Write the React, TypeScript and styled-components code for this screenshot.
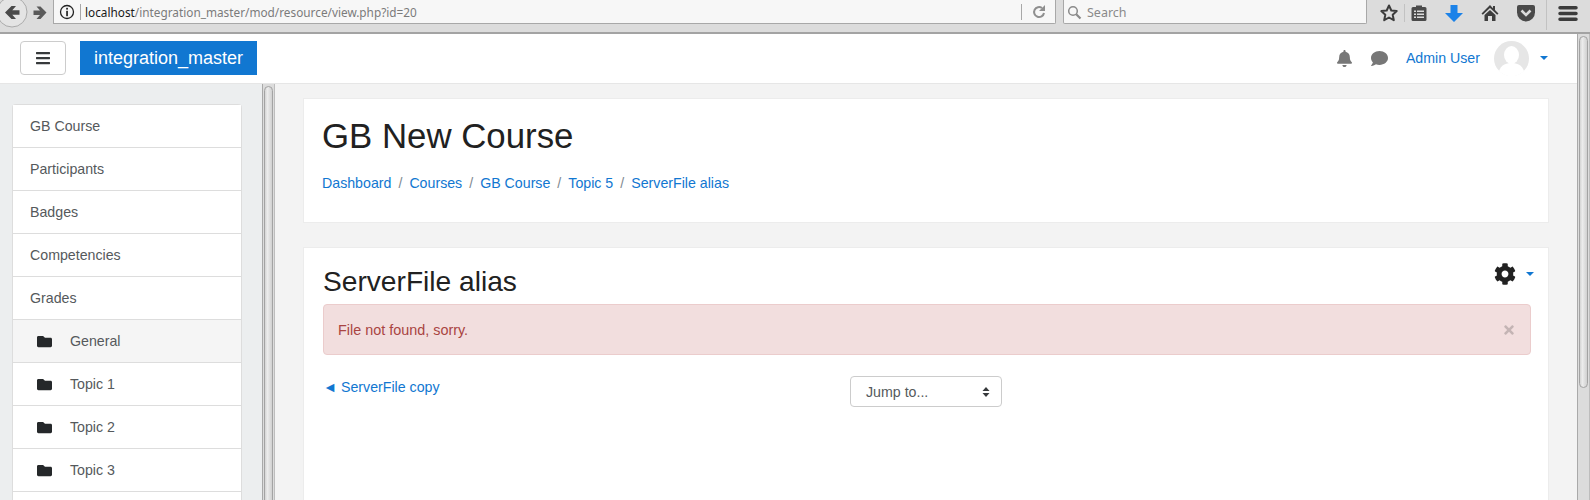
import styled, { createGlobalStyle } from 'styled-components'
import { FaBars, FaBell, FaCog, FaComment, FaFolder, FaTimes } from 'react-icons/fa'

const GlobalStyle = createGlobalStyle`
  html, body {
    margin: 0;
    padding: 0;
    background: #fff;
  }

  * {
    box-sizing: border-box;
  }
`

const Window = styled.div`
  width: 1590px;
  height: 500px;
  overflow: hidden;
  display: flex;
  flex-direction: column;
  font-family: "Liberation Sans", Arial, sans-serif;
  font-size: 14.2px;
  color: #373a3c;
`

/* browser chrome */
const Toolbar = styled.div`
  flex: none;
  height: 34px;
  display: flex;
  background: #dcdcdc;
  border-bottom: 2px solid #a3a3a3;
  overflow: hidden;
`

const NavButtons = styled.svg`
  flex: none;
  width: 53px;
  height: 32px;
`

const UrlBar = styled.div`
  flex: none;
  width: 1003px;
  height: 24px;
  display: flex;
  align-items: center;
  background: #f7f7f7;
  border: 1px solid #a8a8a8;
  border-top: 0;
  border-radius: 0 0 2px 0;
  font-family: "Noto Sans", sans-serif;
  font-size: 11.8px;
`

const InfoIcon = styled.svg`
  flex: none;
  width: 16px;
  height: 16px;
  margin: 0 5px 0 5px;
`

const UrlDivider = styled.div`
  flex: none;
  width: 1px;
  height: 16px;
  background: #a8a8a8;
  margin-right: ${props => props.$gap || 4}px;
`

const UrlText = styled.div`
  flex: 1;
  padding-top: 1px;
  color: #7b7b7b;
  white-space: nowrap;

  b {
    font-weight: 400;
    color: #1a1a1a;
  }
`

const ReloadIcon = styled.svg`
  flex: none;
  width: 16px;
  height: 16px;
  margin-right: 8px;
`

const SearchBar = styled.div`
  flex: none;
  width: 304px;
  height: 24px;
  margin-left: 7px;
  display: flex;
  align-items: center;
  gap: 5px;
  padding: 1px 0 0 3px;
  background: #f7f7f7;
  border: 1px solid #a8a8a8;
  border-top: 0;
  border-radius: 0 0 2px 2px;
  font-family: "Noto Sans", sans-serif;
  font-size: 12.5px;
  color: #8a8a8a;
`

const ToolIcons = styled.div`
  flex: 1;
  display: flex;
  align-items: flex-start;
  padding-top: 3px;
`

const ToolIcon = styled.svg`
  flex: none;
  width: 20px;
  height: 20px;
  margin-left: ${props => props.$left}px;
`

const ToolDivider = styled.div`
  flex: none;
  width: 1px;
  height: ${props => props.$tall ? 30 : 18}px;
  margin-top: ${props => props.$tall ? -3 : 1}px;
  margin-left: ${props => props.$left}px;
  background: #c2c2c2;
`

/* page */
const Viewport = styled.div`
  flex: 1;
  min-height: 0;
  display: flex;
`

const PageColumn = styled.div`
  flex: 1;
  min-width: 0;
  display: flex;
  flex-direction: column;
`

const TopNav = styled.div`
  flex: none;
  height: 50px;
  display: flex;
  align-items: flex-start;
  padding: 7px 0 0 20px;
  background: #fff;
  border-bottom: 1px solid #e6e6e6;
`

const MenuButton = styled.button`
  width: 46px;
  height: 34px;
  padding: 0;
  display: flex;
  align-items: center;
  justify-content: center;
  background: #fff;
  border: 1px solid #ccc;
  border-radius: 4px;
  color: #373a3c;
  font-size: 16px;
`

const Brand = styled.div`
  width: 177px;
  height: 34px;
  margin-left: 14px;
  display: flex;
  align-items: center;
  justify-content: center;
  background: #1177d1;
  color: #fff;
  font-size: 18px;
`

const UserMenu = styled.div`
  margin-left: auto;
  height: 34px;
  display: flex;
  align-items: center;
  color: #777;
`

const ChatIcon = styled(FaComment)`
  margin-left: 18px;
`

const UserName = styled.a`
  margin-left: 18px;
  color: #1177d1;
`

const Avatar = styled.svg`
  width: 35px;
  height: 35px;
  margin-left: 14px;
`

const Caret = styled.span`
  width: 0;
  height: 0;
  margin-left: ${props => props.$left}px;
  margin-right: ${props => props.$right || 0}px;
  border-left: 4px solid transparent;
  border-right: 4px solid transparent;
  border-top: 4px solid #1177d1;
`

const Columns = styled.div`
  flex: 1;
  min-height: 0;
  display: flex;
`

const Sidebar = styled.div`
  flex: none;
  width: 262px;
  padding: 20px 20px 0 12px;
  background: #eceeef;
  overflow: hidden;
`

const NavList = styled.div`
  background: #fff;
  border: 1px solid #ddd;
  border-bottom: 0;
  border-radius: 4px 4px 0 0;
`

const NavRow = styled.div`
  height: 43px;
  display: flex;
  align-items: center;
  padding-left: ${props => props.$nested ? 24 : 17}px;
  gap: 18px;
  background: ${props => props.$active ? '#f5f5f5' : '#fff'};
  border-bottom: 1px solid #ddd;
  color: #55595c;

  svg {
    color: #25282a;
    font-size: 15px;
  }
`

const ScrollTrack = styled.div`
  flex: none;
  width: 13px;
  padding: ${props => props.$top}px 1px 0;
  background: #dcdcdc;
  border-left: 1px solid #a9a9a9;
  border-right: 1px solid #bdbdbd;
  overflow: hidden;
`

const ScrollThumb = styled.div`
  height: ${props => props.$height}px;
  background: linear-gradient(to right, #d4d4d4, #ececec 35%, #d0d0d0);
  border: 1px solid #a3a3a3;
  border-radius: 6px;
`

const Main = styled.div`
  flex: 1;
  min-width: 0;
  padding: 14px 28px 0 28px;
  background: #f3f3f3;
  overflow: hidden;
`

const Card = styled.div`
  background: #fff;
  border: 1px solid #ececec;
`

const HeaderCard = styled(Card)`
  height: 125px;
  padding: 18px 18px 0;
  margin-bottom: 24px;
`

const CourseTitle = styled.h1`
  margin: 0;
  font-size: 34.8px;
  font-weight: 400;
  line-height: 38px;
  color: #212121;
`

const Breadcrumb = styled.div`
  margin-top: 18px;
  display: flex;
  gap: 7px;
  line-height: 20px;
  color: #818a91;

  a {
    color: #1177d1;
  }
`

const Crumb = styled.span`
  display: contents;
`

const ContentCard = styled(Card)`
  height: 300px;
  padding: 17px 17px 0 19px;
  position: relative;
`

const PageTitle = styled.h2`
  margin: 0 0 6px;
  font-size: 28.15px;
  font-weight: 400;
  line-height: 33px;
  color: #212121;
`

const ActionMenu = styled.div`
  position: absolute;
  top: 15px;
  right: 14px;
  display: flex;
  align-items: center;
  color: #212121;
  font-size: 22px;
`

const Alert = styled.div`
  height: 51px;
  padding: 0 14px;
  display: flex;
  align-items: center;
  justify-content: space-between;
  background: #f2dede;
  border: 1px solid #ebcccc;
  border-radius: 4px;
  color: #a94442;
  font-size: 14.4px;
`

const CloseIcon = styled.span`
  display: flex;
  color: #c4b4b4;
  font-size: 14px;
`

const PageNav = styled.div`
  display: grid;
  grid-template-columns: 527px auto;
  margin-top: 21px;
`

const PrevLink = styled.a`
  padding-top: 1px;
  line-height: 20px;
  color: #1177d1;
`

const JumpSelect = styled.div`
  width: 152px;
  height: 31px;
  display: flex;
  align-items: center;
  justify-content: space-between;
  padding: 0 11px 0 15px;
  background: #fff;
  border: 1px solid #ccc;
  border-radius: 4px;
  color: #55595c;
`

const SelectArrows = styled.svg`
  width: 8px;
  height: 12px;
`

const sections = [
  { label: 'GB Course' },
  { label: 'Participants' },
  { label: 'Badges' },
  { label: 'Competencies' },
  { label: 'Grades' },
  { label: 'General', nested: true, active: true },
  { label: 'Topic 1', nested: true },
  { label: 'Topic 2', nested: true },
  { label: 'Topic 3', nested: true },
  { label: '', nested: false },
]

const crumbs = ['Dashboard', 'Courses', 'GB Course', 'Topic 5', 'ServerFile alias']

const App = () => {
  return (
    <Window>
      <GlobalStyle />
      <Toolbar>
        <NavButtons viewBox="0 0 53 32">
          <circle cx="12" cy="12" r="15" fill="#e4e4e4" stroke="#ababab" />
          <path d="M5 12.500l6.500-6.500h4.500l-3.700 4.300H19.500v4.400h-7.200l3.700 4.300h-4.500z" fill="#4a4a4a" />
          <path d="M46.500 12.500l-6-6h-4l3.500 4H33.500v4.500H40l-3.500 4h4z" fill="#5a5a5a" />
        </NavButtons>
        <UrlBar>
          <InfoIcon viewBox="0 0 16 16">
            <circle cx="8" cy="8" r="6.500" fill="none" stroke="#222" strokeWidth="1.300" />
            <rect x="7.200" y="3.800" width="1.700" height="1.800" fill="#222" />
            <rect x="7.200" y="6.800" width="1.700" height="5.400" fill="#222" />
          </InfoIcon>
          <UrlDivider />
          <UrlText><b>localhost</b>/integration_master/mod/resource/view.php?id=20</UrlText>
          <UrlDivider $gap={9} />
          <ReloadIcon viewBox="0 0 16 16">
            <path d="M13 9a5 5 0 1 1-2-5" fill="none" stroke="#8f8f8f" strokeWidth="2" />
            <path d="M14 1v6H8z" fill="#8f8f8f" />
          </ReloadIcon>
        </UrlBar>
        <SearchBar>
          <svg width="15" height="15" viewBox="0 0 15 15">
            <circle cx="6" cy="6" r="4.300" fill="none" stroke="#8a8a8a" strokeWidth="1.500" />
            <path d="M9.200 9.200l4.300 4.300" stroke="#8a8a8a" strokeWidth="2.200" />
          </svg>
          Search
        </SearchBar>
        <ToolIcons>
          <ToolIcon $left={12} viewBox="0 0 20 20">
            <path d="M10 2.500l2.300 5 5.400.6-4 3.700 1.100 5.400L10 14.500l-4.800 2.700 1.100-5.400-4-3.700 5.400-.6z" fill="none" stroke="#3c3c3c" strokeWidth="2" strokeLinejoin="round" />
          </ToolIcon>
          <ToolDivider $left={5} />
          <ToolIcon $left={4} viewBox="0 0 20 20">
            <path d="M4 4h3V2.500h6V4h3a1.500 1.500 0 0 1 1.500 1.500v11A1.500 1.500 0 0 1 16 18H4a1.500 1.500 0 0 1-1.500-1.500v-11A1.500 1.500 0 0 1 4 4z" fill="#4a4a4a" />
            <path d="M5 7.500h2v1.500H5zm3 0h7v1.500H8zM5 10.500h2V12H5zm3 0h7V12H8zM5 13.500h2V15H5zm3 0h7V15H8z" fill="#dcdcdc" />
          </ToolIcon>
          <ToolIcon $left={15} viewBox="0 0 20 20">
            <path d="M6.500 2h7v8H19l-9 9-9-9h5.500z" fill="#1c82e8" />
          </ToolIcon>
          <ToolIcon $left={16} viewBox="0 0 20 20">
            <path d="M10 2L1.500 10.500l1.300 1.300L10 5l7.200 6.800 1.300-1.300L15 7V3h-2v2.200z" fill="#3e3e3e" />
            <path d="M4.500 12L10 7l5.500 5v6H12v-5H8v5H4.500z" fill="#3e3e3e" />
          </ToolIcon>
          <ToolIcon $left={16} viewBox="0 0 20 20">
            <path d="M3 2h14a2 2 0 0 1 2 2v5.500a9 9 0 0 1-18 0V4a2 2 0 0 1 2-2z" fill="#4a4a4a" />
            <path d="M5.500 7.500L10 12l4.500-4.500" fill="none" stroke="#dcdcdc" strokeWidth="2.600" />
          </ToolIcon>
          <ToolDivider $tall $left={10} />
          <ToolIcon $left={11} viewBox="0 0 20 20">
            <path d="M2 3h16a1 1 0 0 1 0 3.500H2A1 1 0 0 1 2 3zm0 5.800h16a1 1 0 0 1 0 3.500H2a1 1 0 0 1 0-3.500zm0 5.700h16a1 1 0 0 1 0 3.500H2a1 1 0 0 1 0-3.500z" fill="#3c3c3c" />
          </ToolIcon>
        </ToolIcons>
      </Toolbar>
      <Viewport>
        <PageColumn>
          <TopNav>
            <MenuButton><FaBars /></MenuButton>
            <Brand>integration_master</Brand>
            <UserMenu>
              <FaBell size={17} />
              <ChatIcon size={17} />
              <UserName>Admin User</UserName>
              <Avatar viewBox="0 0 35 35">
                <circle cx="17.500" cy="17.500" r="17.500" fill="#e6e6e6" />
                <ellipse cx="17.500" cy="14" rx="7.500" ry="9" fill="#fff" />
                <path d="M5 30c2-6 7-8 12.500-8S28 24 30 30a17.500 17.500 0 0 1-25 0z" fill="#fff" />
              </Avatar>
              <Caret $left={11} $right={29} />
            </UserMenu>
          </TopNav>
          <Columns>
            <Sidebar>
              <NavList>
                {sections.map(section => (
                  <NavRow key={section.label} $nested={section.nested} $active={section.active}>
                    {section.nested && <FaFolder />}
                    {section.label}
                  </NavRow>
                ))}
              </NavList>
            </Sidebar>
            <ScrollTrack $top={2}>
              <ScrollThumb $height={500} />
            </ScrollTrack>
            <Main>
              <HeaderCard>
                <CourseTitle>GB New Course</CourseTitle>
                <Breadcrumb>
                  {crumbs.map((crumb, i) => (
                    <Crumb key={crumb}>
                      {i > 0 && <span>/</span>}
                      <a>{crumb}</a>
                    </Crumb>
                  ))}
                </Breadcrumb>
              </HeaderCard>
              <ContentCard>
                <ActionMenu>
                  <FaCog />
                  <Caret $left={10} />
                </ActionMenu>
                <PageTitle>ServerFile alias</PageTitle>
                <Alert>
                  File not found, sorry.
                  <CloseIcon><FaTimes /></CloseIcon>
                </Alert>
                <PageNav>
                  <PrevLink>◄ ServerFile copy</PrevLink>
                  <JumpSelect>
                    Jump to...
                    <SelectArrows viewBox="0 0 8 12">
                      <path d="M4 1l3.500 4h-7zM4 11L.5 7h7z" fill="#373a3c" />
                    </SelectArrows>
                  </JumpSelect>
                </PageNav>
              </ContentCard>
            </Main>
          </Columns>
        </PageColumn>
        <ScrollTrack $top={2}>
          <ScrollThumb $height={352} />
        </ScrollTrack>
      </Viewport>
    </Window>
  )
}

export default App
